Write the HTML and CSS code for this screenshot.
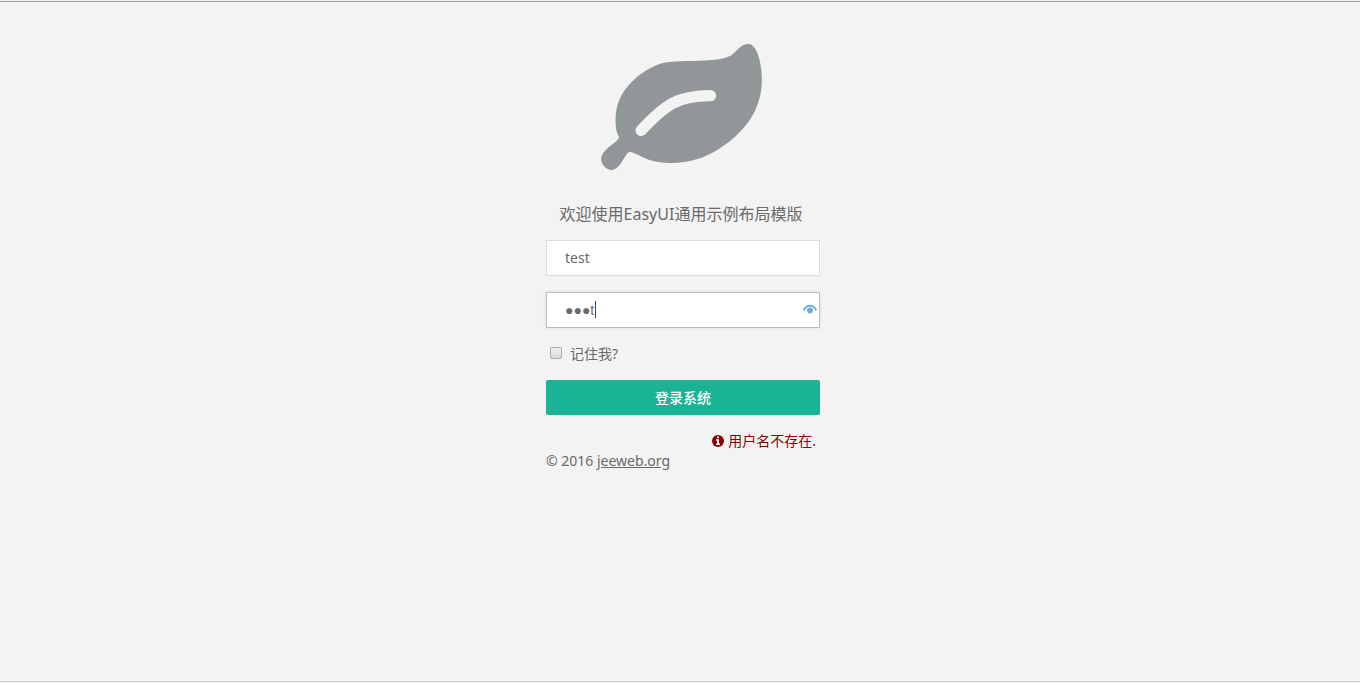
FILE: index.html
```html
<!DOCTYPE html>
<html lang="zh-CN">
<head>
<meta charset="utf-8">
<title>登录系统</title>
<link rel="stylesheet" href="styles.css">
</head>
<body>
<main class="login">
  <svg class="logo" viewBox="33 42 482 378" aria-hidden="true">
    <path class="leaf" d="M472 42C488 41 496 56 502 70C511 95 515 120 515 150C515 240 464 307 385 358C340 386 295 399 245 399C218 399 190 395 170 387C152 380 135 369 122 366C113 364 108 375 102 384C92 400 83 418 66 420C48 421 33 402 33 387C34 367 53 354 68 342C77 335 86 328 87 322C80 309 76 295 76 270C76 225 92 188 125 155C152 128 190 105 222 98C258 92 320 94 365 90C390 88 408 84 421 77C438 66 450 44 472 42Z"/>
    <path class="vein" d="M153 301C225 225 260 197 361 197"/>
  </svg>
  <h1 class="title">欢迎使用EasyUI通用示例布局模版</h1>
  <form class="form">
    <input class="field" type="text" value="test" aria-label="用户名">
    <div class="password">
      <input class="field field-active" type="text" value="●●●t" aria-label="密码">
      <span class="caret"></span>
      <button class="reveal" type="button" aria-label="显示密码">
        <svg viewBox="0 0 14 10" aria-hidden="true">
          <path class="eye-lid" d="M.7 6.300C3.500 .2 10.500 .2 13.300 6.300"/>
          <circle class="eye-ball" cx="7" cy="6.500" r="2.900"/>
        </svg>
      </button>
    </div>
    <label class="remember"><input class="tick" type="checkbox"><span>记住我?</span></label>
    <button class="submit" type="submit">登录系统</button>
    <p class="error" role="alert">
      <svg class="info" viewBox="0 0 12 12" aria-hidden="true">
        <circle class="info-disc" cx="6" cy="6" r="6"/>
        <path class="info-mark" d="M5 1.500H7V3.200H5ZM4 4.300H7V8.500H8V10H4V8.500H5V5.700H4Z"/>
      </svg>
      <span>用户名不存在.</span>
    </p>
  </form>
  <footer class="copyright">© 2016 <a class="link" href="#">jeeweb.org</a></footer>
</main>
</body>
</html>
```
FILE: styles.css
```css
* {
  box-sizing: border-box;
}

body {
  margin: 0;
  min-height: 100vh;
  padding: 1px 0;
  display: flex;
  flex-direction: column;
  background: #f3f3f3;
  color: #6a6a6a;
  font: 14px/20px "Noto Sans", "Noto Sans CJK SC", sans-serif;
}

.login {
  flex: 1;
  border-top: 1px solid #a0a0a0;
  border-bottom: 1px solid #d0d0c8;
  padding: 42px calc(50% - 140px) 0 calc(50% - 134px);
  display: flex;
  flex-direction: column;
}

.logo {
  width: 161px;
  height: 126px;
  margin-left: 55px;
}

.leaf {
  fill: #919699;
}

.vein {
  fill: none;
  stroke: #f3f3f3;
  stroke-width: 34;
  stroke-linecap: round;
}

.title {
  margin: 34px 4px 16px 0;
  font-size: 16px;
  font-weight: 400;
  line-height: 20px;
  text-align: center;
  white-space: nowrap;
}

.form {
  display: flex;
  flex-direction: column;
}

.field {
  width: 100%;
  height: 36px;
  padding: 0 18px 2px;
  border: 1px solid #dcdcdc;
  border-radius: 0;
  outline: 0;
  background: #fff;
  color: inherit;
  font: inherit;
}

.password {
  position: relative;
  margin: 16px 0;
}

.field-active {
  display: block;
  padding-bottom: 0;
  border-color: #bcbcbc;
  box-shadow: 0 0 3px #dcdcdc;
  font-family: "Liberation Sans", sans-serif;
}

.caret {
  position: absolute;
  left: 49px;
  top: 9px;
  width: 1px;
  height: 17px;
  background: #444;
}

.reveal {
  position: absolute;
  right: 3px;
  top: 12px;
  width: 14px;
  height: 10px;
  padding: 0;
  border: 0;
  background: none;
}

.reveal svg {
  display: block;
}

.eye-lid {
  fill: none;
  stroke: #6cade0;
  stroke-width: 2;
}

.eye-ball {
  fill: #6cade0;
}

.remember {
  display: flex;
  align-items: center;
  gap: 8px;
  padding-left: 4px;
}

.tick {
  appearance: none;
  width: 12px;
  height: 12px;
  margin: 0 0 2px;
  border: 1px solid #acacac;
  border-radius: 2px;
  background: linear-gradient(#eee, #d9d9d9);
}

.submit {
  height: 35px;
  margin: 16px 0;
  border: 0;
  border-radius: 2px;
  background: #1ab394;
  color: #fff;
  font: inherit;
  font-weight: 500;
}

.error {
  display: flex;
  align-items: center;
  justify-content: flex-end;
  gap: 4px;
  margin: 0 4px 0 0;
  color: #8b0000;
}

.info {
  width: 12px;
  height: 12px;
}

.info-disc {
  fill: #8b0000;
}

.info-mark {
  fill: #f3f3f3;
}

.link {
  color: inherit;
}
```
